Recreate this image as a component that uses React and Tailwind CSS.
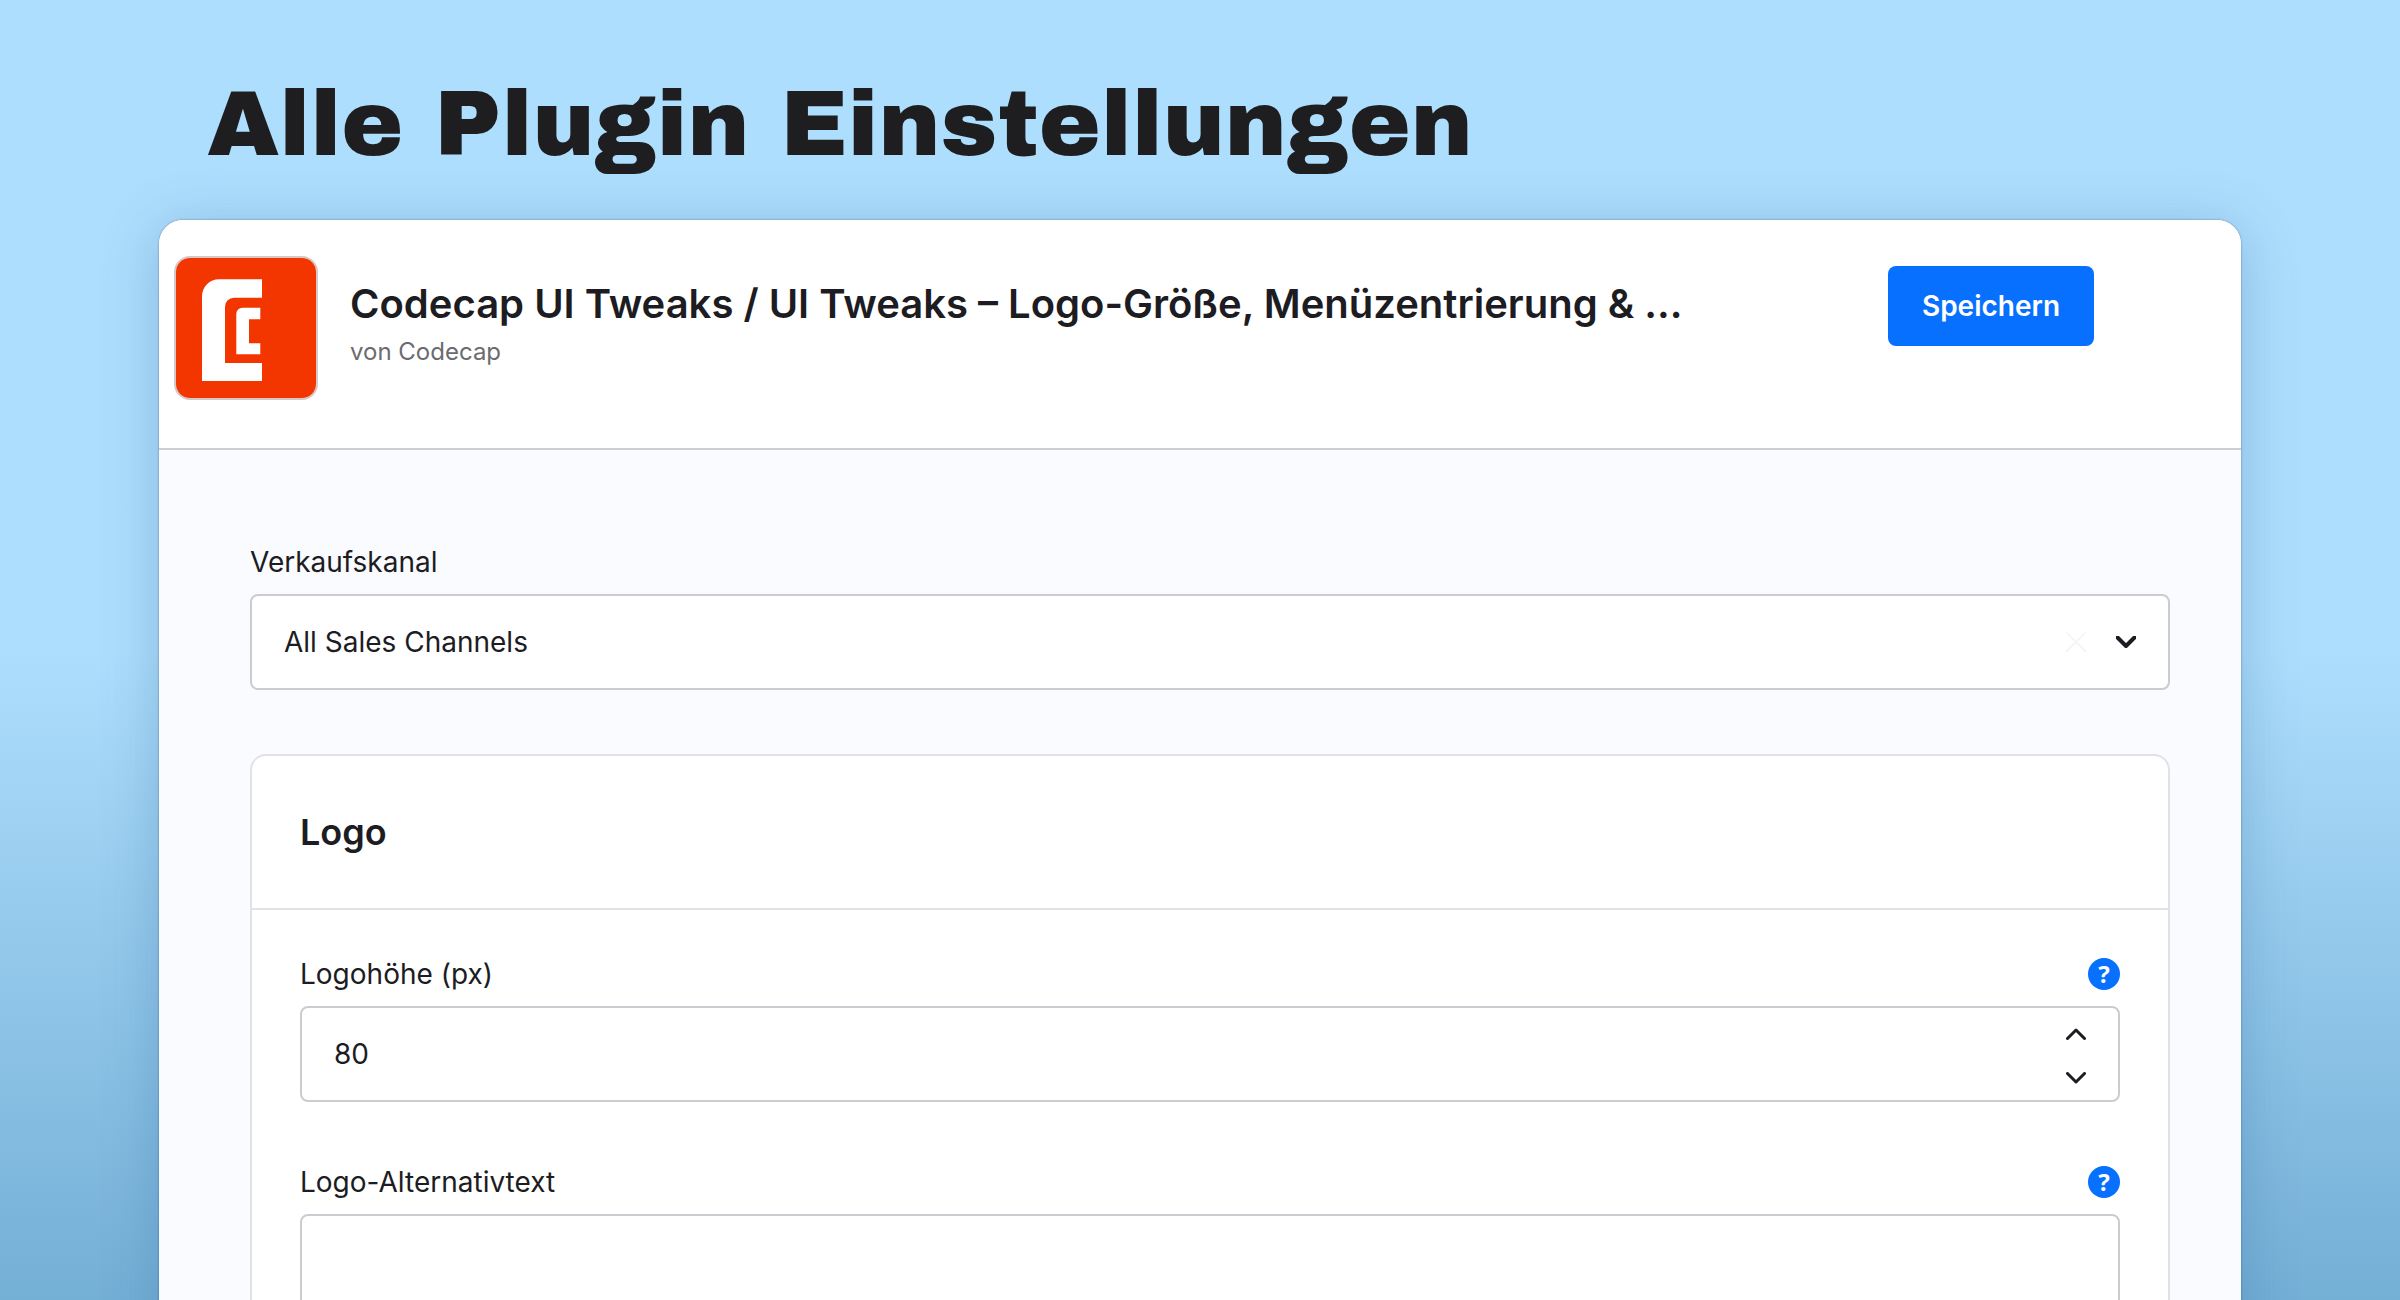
import React, { useState } from "react";

const PluginLogo = () => (
  <svg viewBox="1 1 140 140" className="size-full" aria-hidden="true">
    <rect width="142" height="142" fill="#f33600" />
    <path
      d="M87 22.3H44A17 17 0 0 0 27 39.3V124H87V106H50V49.7A9 9 0 0 1 59 40.7H87Z"
      fill="#fff"
    />
    <path
      d="M85.3 50.7H67.3A6 6 0 0 0 61.3 56.7V97.3H85.3V86.3H74V62.3H85.3Z"
      fill="#fff"
    />
  </svg>
);

const Chevron = ({ up, strokeWidth }) => (
  <svg viewBox="0 0 20 12" className="h-3 w-5" fill="none" aria-hidden="true">
    <path
      d={up ? "M1.5 10.5L10 2L18.5 10.5" : "M1.5 1.5L10 10L18.5 1.5"}
      stroke="#1c1c22"
      strokeWidth={strokeWidth}
      strokeLinecap="round"
      strokeLinejoin="round"
    />
  </svg>
);

const Field = ({ id, label, children }) => (
  <div className="flex flex-col gap-4">
    <div className="flex h-8 items-center justify-between">
      <label htmlFor={id} className="text-[28px] leading-8">
        {label}
      </label>
      <button
        type="button"
        className="flex size-8 items-center justify-center rounded-full bg-[#0870ff] font-['Noto_Sans',sans-serif] text-2xl leading-none font-bold text-white"
      >
        ?
      </button>
    </div>
    {children}
  </div>
);

const App = () => {
  const [channel, setChannel] = useState("all");

  const [height, setHeight] = useState(80);

  const [alt, setAlt] = useState("");

  return (
    <div className="h-screen overflow-hidden bg-linear-to-b from-[#aedefd] from-50% to-[#74afd6] px-[159px] font-[Inter,sans-serif] text-[#1c1c22]">
      <h1 className="flex h-[220px] items-center px-12 pt-7 font-['Archivo_Black',Inter,sans-serif] text-[93px] leading-none font-normal text-[#1e1e20]">
        Alle Plugin Einstellungen
      </h1>

      <main className="rounded-t-3xl bg-[#fafbff] shadow-[0_0_2px_rgba(40,60,90,0.6),0_8px_56px_rgba(40,100,150,0.3)]">
        <header className="flex h-[230px] items-start rounded-t-3xl border-b-2 border-[#cdced3] bg-white pr-[147px] pl-[15px]">
          <div className="mt-9 size-36 shrink-0 overflow-hidden rounded-2xl border-2 border-[#d5c8c8]">
            <PluginLogo />
          </div>
          <div className="mt-[60px] ml-8 min-w-0 flex-1">
            <h2 className="text-[40px] leading-12 font-semibold whitespace-nowrap">
              Codecap UI Tweaks / UI Tweaks – Logo-Größe, Menüzentrierung & ...
            </h2>
            <p className="mt-2 text-2xl leading-8 text-[#6b6b70]">
              von Codecap
            </p>
          </div>
          <button
            type="button"
            className="mt-[46px] h-20 w-[206px] shrink-0 rounded-lg bg-[#0870ff] text-[28px] font-semibold text-white"
          >
            Speichern
          </button>
        </header>

        <div className="flex flex-col gap-16 pt-24 pr-[71px] pl-[91px]">
          <div className="flex flex-col gap-4">
            <label htmlFor="channel" className="text-[28px] leading-8">
              Verkaufskanal
            </label>
            <div className="relative">
              <select
                id="channel"
                value={channel}
                onChange={(e) => setChannel(e.target.value)}
                className="h-24 w-full appearance-none rounded-lg border-2 border-[#cbccd2] bg-white px-8 text-[28px]"
              >
                <option value="all">All Sales Channels</option>
              </select>
              <div className="pointer-events-none absolute inset-y-0 right-[34px] flex items-center gap-[30px]">
                <svg viewBox="0 0 20 20" className="size-5" aria-hidden="true">
                  <path
                    d="M1 1L19 19M19 1L1 19"
                    stroke="#f6f6f8"
                    strokeWidth="2"
                    strokeLinecap="round"
                  />
                </svg>
                <Chevron strokeWidth="4" />
              </div>
            </div>
          </div>

          <section className="rounded-t-2xl border-2 border-b-0 border-[#e1e2e8] bg-white">
            <div className="border-b-2 border-[#e1e2e8] px-12 py-[52px]">
              <h3 className="text-4xl leading-12 font-semibold">Logo</h3>
            </div>
            <div className="flex flex-col gap-16 p-12">
              <Field id="logo-height" label="Logohöhe (px)">
                <div className="relative">
                  <input
                    id="logo-height"
                    type="text"
                    inputMode="numeric"
                    value={height}
                    onChange={(e) => setHeight(Number(e.target.value) || 0)}
                    className="h-24 w-full rounded-lg border-2 border-[#cbccd2] bg-white px-8 text-[28px]"
                  />
                  <div className="absolute inset-y-0 right-6 flex flex-col justify-center gap-3 pt-1">
                    <button
                      type="button"
                      aria-label="Erhöhen"
                      onClick={() => setHeight(height + 1)}
                      className="flex h-8 w-10 items-center justify-center"
                    >
                      <Chevron up strokeWidth="3" />
                    </button>
                    <button
                      type="button"
                      aria-label="Verringern"
                      onClick={() => setHeight(height - 1)}
                      className="flex h-8 w-10 items-center justify-center"
                    >
                      <Chevron strokeWidth="3" />
                    </button>
                  </div>
                </div>
              </Field>
              <Field id="logo-alt" label="Logo-Alternativtext">
                <input
                  id="logo-alt"
                  type="text"
                  value={alt}
                  onChange={(e) => setAlt(e.target.value)}
                  className="h-24 w-full rounded-lg border-2 border-[#cbccd2] bg-white px-8 text-[28px]"
                />
              </Field>
            </div>
          </section>
        </div>
      </main>
    </div>
  );
};

export default App;
